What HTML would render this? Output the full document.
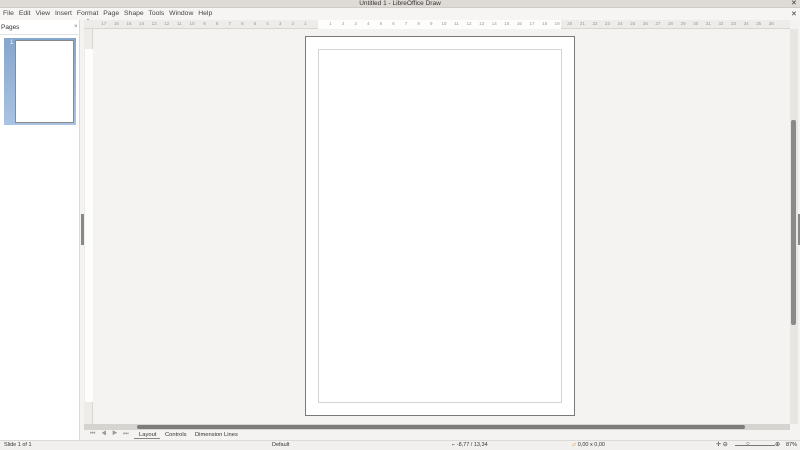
<!DOCTYPE html><html><head><style>
*{margin:0;padding:0;box-sizing:border-box}
body{width:800px;height:450px;background:#f4f3f1;font-family:"Liberation Sans",sans-serif;position:relative;overflow:hidden;color:#333}
.a{position:absolute}
.t{font-size:6.5px;white-space:nowrap}
.r{position:absolute;left:97.5px;top:21px;display:flex;font-size:4.5px;color:#999;overflow:hidden;width:690px}
.r span{width:12.6px;flex:none;text-align:center;line-height:6px}
</style></head><body>
<div class="a" style="left:0;top:0;width:800px;height:8px;background:#dedbd7;border-bottom:1px solid #cfccc7"></div>
<div class="a t" style="left:0;width:800px;top:0;text-align:center;font-size:6.5px;line-height:8px;color:#333">Untitled 1 - LibreOffice Draw</div>
<div class="a t" style="left:791px;top:0;font-size:7px;line-height:8px">✕</div>
<div class="a" style="left:0;top:8px;width:800px;height:12px;background:#f6f5f4"></div>
<div class="a t" style="left:3px;top:10px;font-size:6.8px;word-spacing:3px;color:#444">File Edit View Insert Format Page Shape Tools Window Help</div>
<div class="a t" style="left:791px;top:10px;font-size:7px">✕</div>
<div class="a" style="left:0;top:20px;width:80px;height:420px;background:#fff;border-right:1px solid #dcdad6"></div>
<div class="a t" style="left:1px;top:24px;font-size:6.5px">Pages</div>
<div class="a t" style="left:74px;top:24px;font-size:6px;color:#777">×</div>
<div class="a" style="left:0;top:34px;width:80px;height:1px;background:#e5e3e0"></div>
<div class="a" style="left:4px;top:38px;width:72px;height:87px;background:linear-gradient(#86a6cc,#a9c3e3)"></div>
<div class="a t" style="left:10px;top:40px;color:#fff;font-size:6px">1</div>
<div class="a" style="left:15px;top:40px;width:59px;height:83px;background:#fff;border:1px solid #8a8a8a"></div>
<div class="a" style="left:81px;top:214px;width:3px;height:31px;background:#888"></div>
<div class="a" style="left:796px;top:214px;width:4px;height:31px;background:#888"></div>
<div class="a" style="left:84px;top:20px;width:706px;height:9px;background:#eeece9;border-bottom:1px solid #d8d6d2"></div>
<div class="a" style="left:318px;top:20px;width:243px;height:9px;background:#fdfdfc"></div>
<div class="r"><span>17</span><span>16</span><span>15</span><span>14</span><span>13</span><span>12</span><span>11</span><span>10</span><span>9</span><span>8</span><span>7</span><span>6</span><span>5</span><span>4</span><span>3</span><span>2</span><span>1</span><span></span><span>1</span><span>2</span><span>3</span><span>4</span><span>5</span><span>6</span><span>7</span><span>8</span><span>9</span><span>10</span><span>11</span><span>12</span><span>13</span><span>14</span><span>15</span><span>16</span><span>17</span><span>18</span><span>19</span><span>20</span><span>21</span><span>22</span><span>23</span><span>24</span><span>25</span><span>26</span><span>27</span><span>28</span><span>29</span><span>30</span><span>31</span><span>32</span><span>33</span><span>34</span><span>35</span><span>36</span></div>
<div class="a t" style="left:87px;top:20px;font-size:6px;color:#555">ˆ</div>
<div class="a" style="left:84px;top:29px;width:9px;height:395px;background:#eeece9;border-right:1px solid #d8d6d2"></div>
<div class="a" style="left:85px;top:49px;width:8px;height:353px;background:#fdfdfc"></div>
<div class="a" style="left:305px;top:36px;width:270px;height:380px;background:#fff;border:1px solid #7a7a7a"></div>
<div class="a" style="left:318px;top:49px;width:244px;height:354px;border:1px solid #d4d4d4"></div>
<div class="a" style="left:790px;top:29px;width:8px;height:395px;background:#e8e6e3"></div>
<div class="a" style="left:791px;top:120px;width:5px;height:205px;background:#8a8a8a;border-radius:2px"></div>
<div class="a" style="left:84px;top:424px;width:706px;height:6px;background:#d6d4d0"></div>
<div class="a" style="left:137px;top:425px;width:608px;height:4px;background:#7c7c7c;border-radius:2px"></div>
<div class="a t" style="left:90px;top:431px;font-size:6px;color:#999;word-spacing:4px">⏮ ◀ ▶ ⏭</div>
<div class="a t" style="left:139px;top:432px;font-size:5.8px">Layout</div>
<div class="a" style="left:134px;top:438px;width:26px;height:1px;background:#888"></div>
<div class="a t" style="left:165px;top:432px;font-size:5.8px">Controls</div>
<div class="a t" style="left:195px;top:432px;font-size:5.8px">Dimension Lines</div>
<div class="a" style="left:0;top:440px;width:800px;height:10px;background:#f1f0ee;border-top:1px solid #dcdad6"></div>
<div class="a t" style="left:4px;top:442px;font-size:5.5px">Slide 1 of 1</div>
<div class="a t" style="left:272px;top:442px;font-size:5.5px">Default</div>
<div class="a t" style="left:452px;top:442px;font-size:5.5px">⌐ -8,77 / 13,34</div>
<div class="a t" style="left:572px;top:442px;font-size:5.5px"><span style="color:#e8a030">▱</span> 0,00 x 0,00</div>
<div class="a t" style="left:716px;top:441px;font-size:6px">✛ ⊖</div>
<div class="a" style="left:735px;top:445px;width:40px;height:1px;background:#777"></div>
<div class="a t" style="left:746px;top:441px;font-size:6px">○</div>
<div class="a t" style="left:775px;top:441px;font-size:6px">⊕</div>
<div class="a t" style="left:786px;top:442px;font-size:5.5px">87%</div>
</body></html>
